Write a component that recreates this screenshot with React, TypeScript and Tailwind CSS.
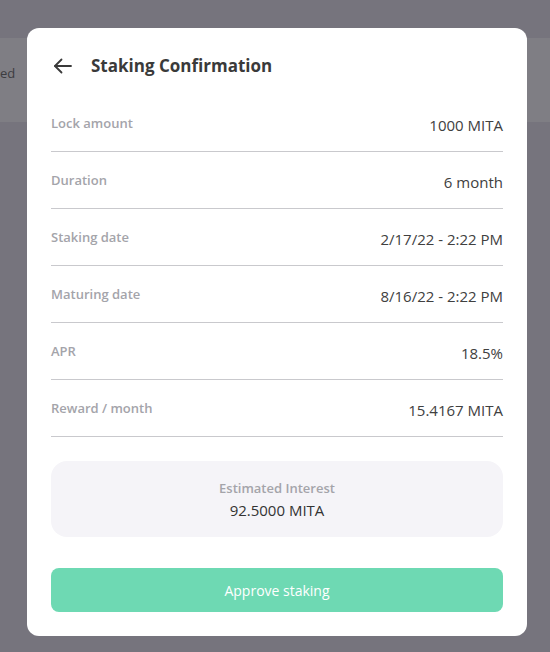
import React from "react";

const rows = [
  { label: "Lock amount", value: "1000 MITA" },
  { label: "Duration", value: "6 month" },
  { label: "Staking date", value: "2/17/22 - 2:22 PM" },
  { label: "Maturing date", value: "8/16/22 - 2:22 PM" },
  { label: "APR", value: "18.5%" },
  { label: "Reward / month", value: "15.4167 MITA" },
];

export default function App() {
  return (
    <div
      className="relative w-[550px] h-[652px] overflow-hidden bg-[#76747d]"
      style={{ fontFamily: '"Open Sans", "Noto Sans", sans-serif' }}
    >
      {/* background page (dimmed) */}
      <div className="h-[38px]" />
      <div className="h-[84px] bg-[#7f7e84] pt-[22px]">
        <span className="text-[13px] text-[#3c3c40] leading-5">ed</span>
      </div>

      {/* modal */}
      <div className="absolute left-[27px] top-[28px] w-[500px] h-[608px] bg-white rounded-[12px] px-[24px] pt-[24px]">
        <div className="flex items-center h-[28px]">
          <svg width="20" height="16" viewBox="0 0 20 16" className="ml-[2px] text-[#3a3a3a]" fill="none" stroke="currentColor" strokeWidth="1.8" strokeLinecap="round" strokeLinejoin="round">
            <path d="M18 8H2" />
            <path d="M8.5 1.5L2 8l6.5 6.5" />
          </svg>
          <h1 className="ml-[18px] text-[17px] font-bold text-[#3a3a3a] leading-[28px]">Staking Confirmation</h1>
        </div>
        <div className="mt-[15px]">
          {rows.map((r) => (
            <div
              key={r.label}
              className="flex items-start justify-between h-[57px] border-b border-[#c9c9cd]"
            >
              <span className="mt-[19px] text-[13px] font-semibold text-[#a4a4aa] leading-[18px]">{r.label}</span>
              <span className="mt-[20px] text-[15px] text-[#404040] leading-5">{r.value}</span>
            </div>
          ))}
        </div>
        <div className="mt-[24px] h-[76px] rounded-[16px] bg-[#f5f4f8] flex flex-col items-center justify-center">
          <span className="text-[13px] font-semibold text-[#a4a4aa] leading-5">Estimated Interest</span>
          <span className="text-[15px] text-[#333333] leading-5 mt-[2px]">92.5000 MITA</span>
        </div>
        <button className="mt-[31px] w-full h-[44px] rounded-[8px] bg-[#6ed9b3] text-white text-[14px] font-medium flex items-center justify-center">
          Approve staking
        </button>
      </div>
    </div>
  );
}
